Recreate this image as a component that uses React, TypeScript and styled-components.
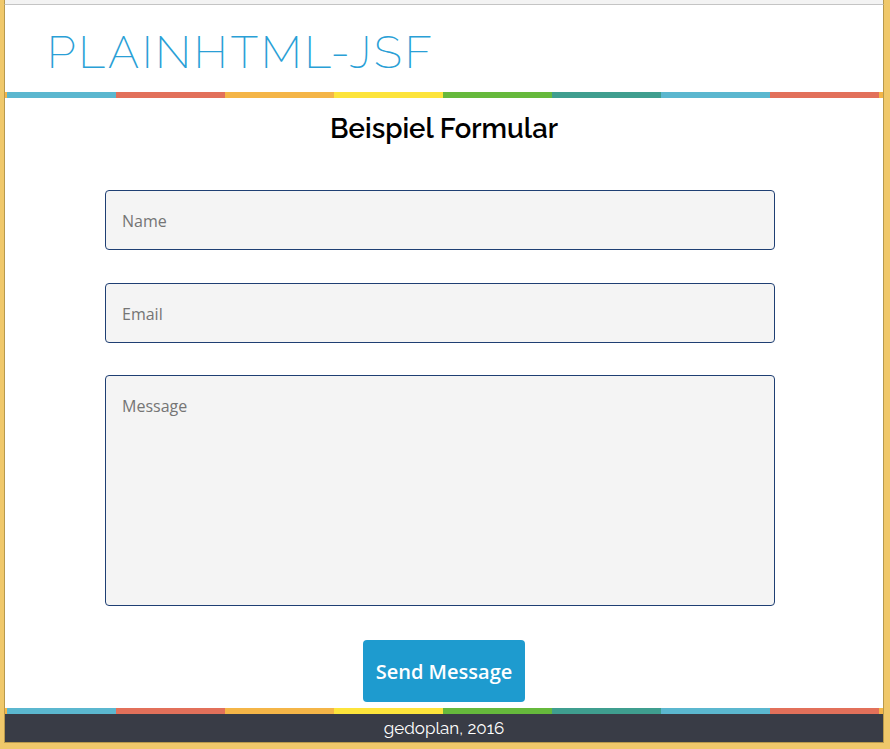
import React from "react";
import styled, { createGlobalStyle } from "styled-components";

const Global = createGlobalStyle`
  html, body { margin: 0; padding: 0; background: #f3f3f3; }
  * { box-sizing: border-box; }
`;

const Window = styled.div`
  width: 890px;
  height: 749px;
  display: flex;
  flex-direction: column;
  background: #f3f3f3;
  border-left: 4px solid #f0c86a;
  border-right: 6px solid #f0c86a;
  border-bottom: 6px solid #f0c86a;
  box-shadow: 0 1px 0 #c9b07a;
`;

const Chrome = styled.div`
  height: 5px;
  flex: none;
  background: #f3f3f3;
  border-bottom: 1px solid #c4c4c4;
  border-left: 1px solid #b8994c;
  border-right: 1px solid #b8994c;
`;

const Page = styled.div`
  flex: 1;
  display: flex;
  flex-direction: column;
  background: #fff;
  border-left: 1px solid #b8994c;
  border-right: 1px solid #b8994c;
  border-bottom: 1px solid #b8994c;
`;

const Header = styled.header`
  height: 87px;
  flex: none;
  display: flex;
  align-items: center;
  padding-left: 42px;
  padding-top: 6px;
`;

const Title = styled.h1`
  margin: 0;
  font-family: Raleway, Lato, "Open Sans", sans-serif;
  font-weight: 200;
  font-size: 46px;
  letter-spacing: 2.9px;
  color: #2a9fd6;
  line-height: 1;
`;

const Stripe = styled.div`
  height: 6px;
  flex: none;
  background: repeating-linear-gradient(
    to right,
    #5bb7cf 0px, #5bb7cf 109px,
    #e2705a 109px, #e2705a 218px,
    #f4b547 218px, #f4b547 327px,
    #fde43b 327px, #fde43b 436px,
    #66b93c 436px, #66b93c 545px,
    #3f9e8f 545px, #3f9e8f 654px
  );
  background-position: 2px 0;
`;

const Main = styled.main`
  flex: 1;
  display: flex;
  flex-direction: column;
  align-items: center;
`;

const Heading = styled.h2`
  margin: 15px 0 0;
  font-family: Raleway, Lato, sans-serif;
  font-weight: 600;
  font-size: 27.5px;
  line-height: 30px;
  color: #000;
  transform: translateX(0px);
`;

const Form = styled.form`
  margin-top: 47px;
  width: 670px;
  display: flex;
  flex-direction: column;
  gap: 33px;
  transform: translateX(-4px);
`;

const Field = styled.input`
  height: 60px;
  width: 100%;
  border: 1px solid #1f3f73;
  border-radius: 4px;
  background: #f4f4f4;
  padding: 2px 16px 0;
  font-family: "Open Sans", sans-serif;
  font-size: 16px;
  color: #333;
  &::placeholder { color: #757575; }
`;

const Area = styled.textarea`
  height: 231px;
  width: 100%;
  border: 1px solid #1f3f73;
  border-radius: 4px;
  background: #f4f4f4;
  padding: 19px 16px;
  font-family: "Open Sans", sans-serif;
  font-size: 16px;
  resize: none;
  margin-top: -1px;
  &::placeholder { color: #757575; }
`;

const Button = styled.button`
  margin-top: 34px;
  width: 162px;
  height: 62px;
  border: none;
  border-radius: 4px;
  background: #1e9bcf;
  color: #fff;
  font-family: "Open Sans", sans-serif;
  font-weight: 600;
  font-size: 20px;
`;

const Footer = styled.footer`
  flex: none;
  height: 28px;
  background: #393c46;
  color: #fff;
  display: flex;
  align-items: center;
  justify-content: center;
  font-family: Raleway, Lato, sans-serif;
  font-size: 17px;
`;

export default function App() {
  return (
    <>
      <Global />
      <Window>
        <Chrome />
        <Page>
          <Header>
            <Title>PLAINHTML-JSF</Title>
          </Header>
          <Stripe />
          <Main>
            <Heading>Beispiel Formular</Heading>
            <Form onSubmit={(e) => e.preventDefault()}>
              <Field placeholder="Name" />
              <Field placeholder="Email" />
              <Area placeholder="Message" />
            </Form>
            <Button type="button">Send Message</Button>
          </Main>
          <Stripe />
          <Footer>gedoplan, 2016</Footer>
        </Page>
      </Window>
    </>
  );
}
